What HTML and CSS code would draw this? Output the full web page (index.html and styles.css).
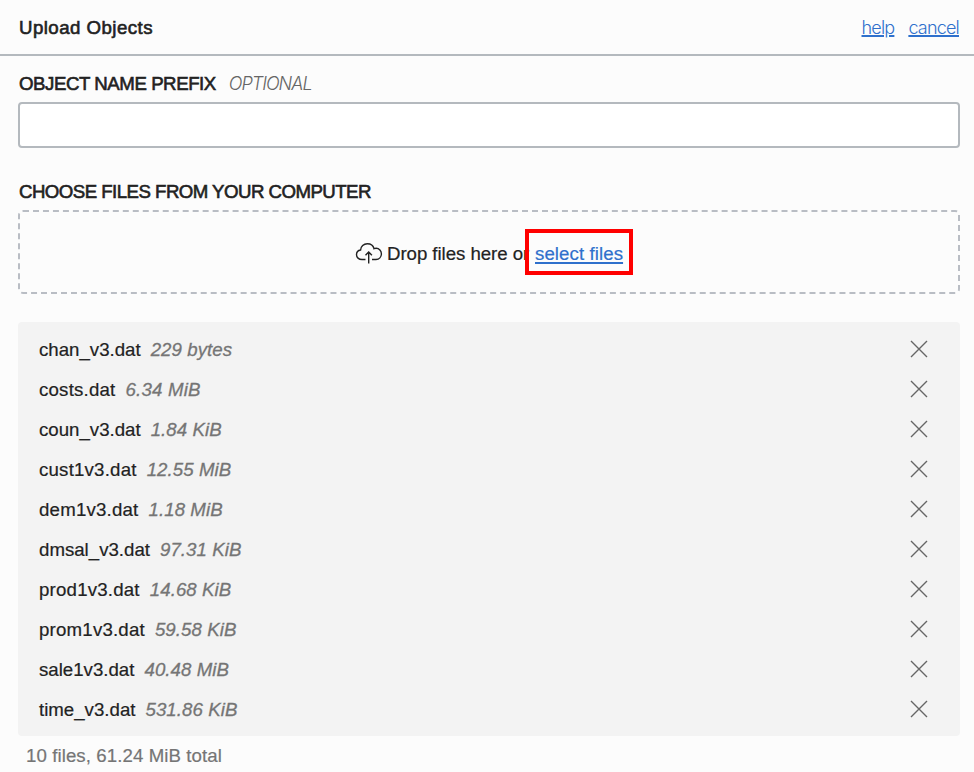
FILE: index.html
```
<!DOCTYPE html>
<html lang="en">
<head>
<meta charset="utf-8">
<title>Upload Objects</title>
<link rel="stylesheet" href="styles.css">
</head>
<body>
<svg class="defs" width="0" height="0"><symbol id="x" viewBox="0 0 18 18"><path d="M1 1 17 17M17 1 1 17"/></symbol></svg>
<header class="header">
  <h1 class="title">Upload Objects</h1>
  <nav class="links"><a class="help" href="#">help</a><a class="cancel" href="#">cancel</a></nav>
</header>
<main class="main">
  <label class="label" for="prefix"><span class="prefix-label">OBJECT NAME PREFIX</span><em class="optional">OPTIONAL</em></label>
  <input class="input" id="prefix" type="text">
  <h2 class="label choose"><span class="choose-label">CHOOSE FILES FROM YOUR COMPUTER</span></h2>
  <div class="drop">
    <svg class="cloud" viewBox="0 0 28 24"><path d="M10.500 18.500H7C3.700 18.500 1.500 16.400 1.500 13.700C1.500 11.200 3.300 9.300 5.600 9C5.700 5.300 8.700 2.700 12.300 2.700C15.600 2.700 18.300 4.700 19 7.700C19.700 7.400 20.400 7.300 21.100 7.300C24.200 7.300 26.400 9.800 26.400 12.800C26.400 16 24.100 18.500 21 18.500H17"/><path d="M13.700 22.500V11.300M10.500 14.300 13.700 11.100 16.900 14.300"/></svg>
    <span class="drop-text">Drop files here or</span>
    <a class="select" href="#"><span class="select-text">select files</span></a>
  </div>
  <ul class="files">
    <li class="file"><span class="name">chan_v3.dat</span><em class="size">229 bytes</em><svg class="remove"><use href="#x"/></svg></li>
    <li class="file"><span class="name loose">costs.dat</span><em class="size loose">6.34 MiB</em><svg class="remove"><use href="#x"/></svg></li>
    <li class="file"><span class="name">coun_v3.dat</span><em class="size">1.84 KiB</em><svg class="remove"><use href="#x"/></svg></li>
    <li class="file"><span class="name loose">cust1v3.dat</span><em class="size">12.55 MiB</em><svg class="remove"><use href="#x"/></svg></li>
    <li class="file"><span class="name loose">dem1v3.dat</span><em class="size">1.18 MiB</em><svg class="remove"><use href="#x"/></svg></li>
    <li class="file"><span class="name">dmsal_v3.dat</span><em class="size">97.31 KiB</em><svg class="remove"><use href="#x"/></svg></li>
    <li class="file"><span class="name loose">prod1v3.dat</span><em class="size">14.68 KiB</em><svg class="remove"><use href="#x"/></svg></li>
    <li class="file"><span class="name loose">prom1v3.dat</span><em class="size">59.58 KiB</em><svg class="remove"><use href="#x"/></svg></li>
    <li class="file"><span class="name">sale1v3.dat</span><em class="size">40.48 MiB</em><svg class="remove"><use href="#x"/></svg></li>
    <li class="file"><span class="name">time_v3.dat</span><em class="size">531.86 KiB</em><svg class="remove"><use href="#x"/></svg></li>
  </ul>
  <p class="total">10 files, 61.24 MiB total</p>
</main>
</body>
</html>
```
FILE: styles.css
```
*, *::after { box-sizing: border-box; margin: 0; padding: 0; }
html, body { height: 772px; overflow: hidden; }
body { background: #fcfcfc; color: #222; font: 18.67px/24px "Liberation Sans", Arial, sans-serif; white-space: nowrap; }
.defs { position: absolute; }
a { color: #2f70cc; text-decoration-thickness: 2px; text-underline-offset: 2px; }
.header { height: 56px; border-bottom: 2px solid #b4b9be; padding: 0 15px 0 19px; display: flex; justify-content: space-between; align-items: center; }
.title { padding-top: 2px; font-size: 18.67px; font-weight: 400; -webkit-text-stroke: 0.6px #222; letter-spacing: 0.46px; }
.links { display: flex; gap: 14px; padding-top: 1px; font-family: Inter, "Liberation Sans", sans-serif; font-weight: 300; font-size: 18px; letter-spacing: -0.8px; }
.links a { text-underline-offset: 1px; }
.main { padding: 16px 14px 0 18px; }
.label { display: flex; align-items: center; height: 24px; padding-left: 1px; font-size: 18.67px; font-weight: 400; }
.prefix-label, .choose-label { -webkit-text-stroke: 0.6px #222; letter-spacing: -0.45px; }
.choose-label { letter-spacing: -0.54px; }
.optional { margin-left: 13px; color: #666; font-family: Inter, "Liberation Sans", sans-serif; font-weight: 300; font-size: 18px; letter-spacing: -1px; }
.input { display: block; width: 100%; height: 46px; margin-top: 6px; border: 2px solid #b4b9be; border-radius: 4px; background: #fff; padding: 0 12px; font: inherit; outline: 0; }
.choose { margin-top: 32px; }
.drop { display: flex; align-items: center; height: 84px; margin-top: 6px; padding: 4px 0 0 335px; border: 2px dashed #b9bdc4; border-radius: 5px; }
.cloud { width: 28px; height: 24px; margin: 0 4px 2px 0; fill: none; stroke: #222; stroke-width: 1.4; }
.drop-text { width: 148px; letter-spacing: -0.05px; -webkit-text-stroke: 0.2px #222; }
.select { position: relative; letter-spacing: 0.08px; -webkit-text-stroke: 0.2px #2f70cc; }
.select::after { content: ""; position: absolute; left: -10px; top: -13px; width: 108px; height: 46px; border: 4px solid #f00; }
.files { list-style: none; margin-top: 28px; height: 414px; padding: 7px 32px 7px 21px; background: #f3f3f3; border-radius: 4px; }
.file { display: flex; align-items: center; height: 40px; }
.name, .size { padding-top: 2px; }
.name { -webkit-text-stroke: 0.2px #222; }
.size { margin-left: 10px; color: #757575; letter-spacing: 0.07px; -webkit-text-stroke: 0.3px #757575; }
.loose { letter-spacing: 0.2px; }
.remove { width: 18px; height: 18px; margin-left: auto; fill: none; stroke: #666; stroke-width: 1.4; }
.total { margin: 8px 0 0 8px; color: #757575; letter-spacing: 0.08px; -webkit-text-stroke: 0.2px #757575; }
```
